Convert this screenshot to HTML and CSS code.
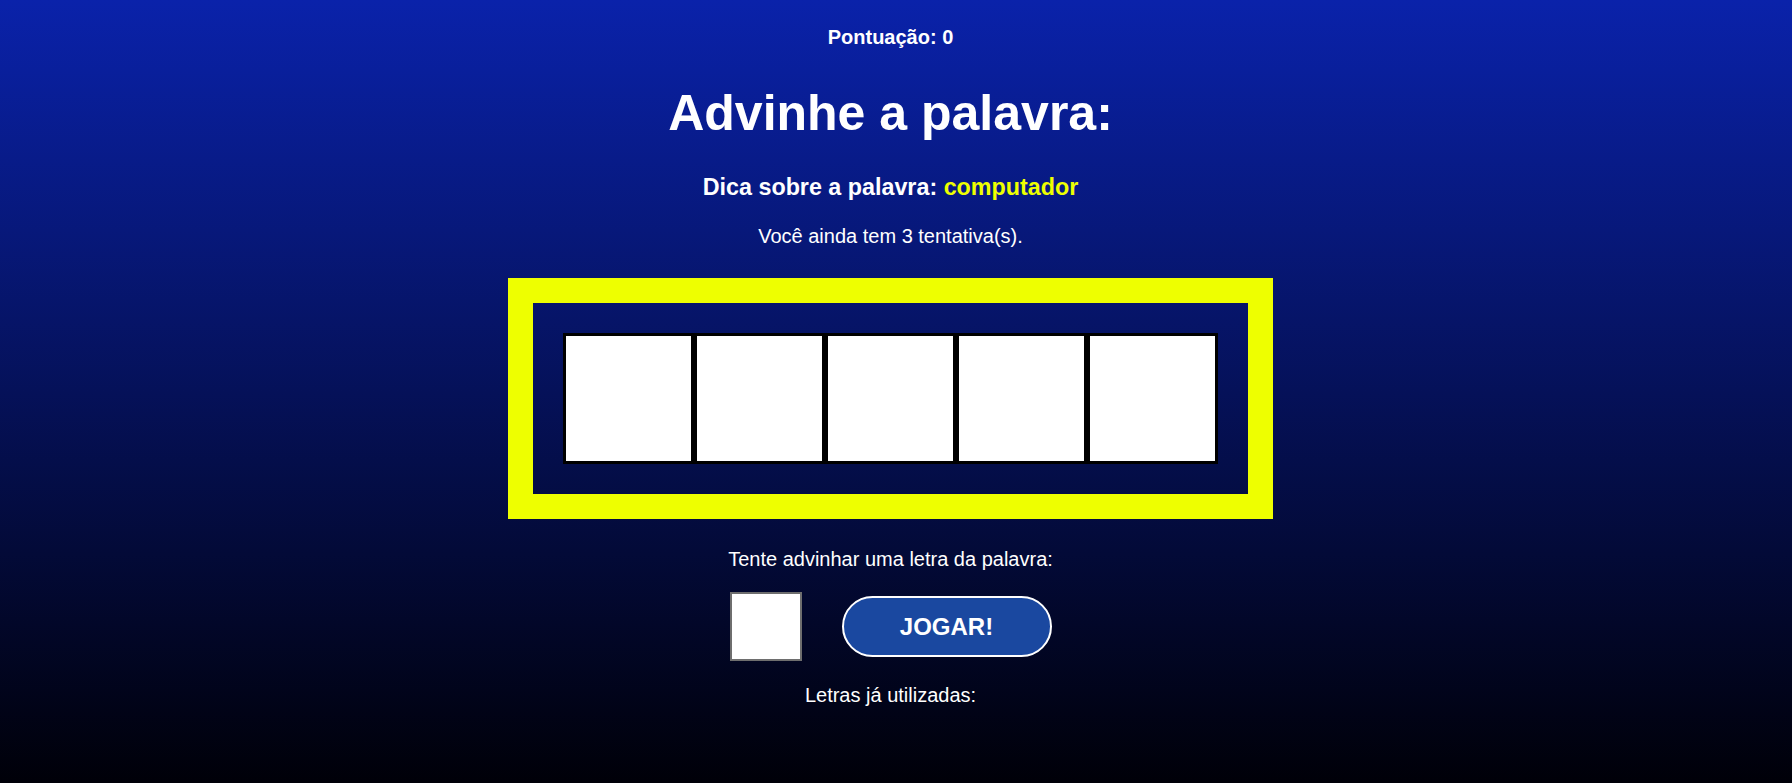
FILE: index.html
```html
<!DOCTYPE html>
<html lang="pt-BR">
<head>
<meta charset="utf-8">
<title>Advinhe a palavra</title>
<link rel="stylesheet" href="styles.css">
</head>
<body>
<main class="page">
  <p class="score">Pontuação: 0</p>
  <h1 class="title">Advinhe a palavra:</h1>
  <p class="hint">Dica sobre a palavra: <span class="hint-word">computador</span></p>
  <p class="tries">Você ainda tem 3 tentativa(s).</p>
  <section class="board">
    <div class="tiles">
      <div class="tile"></div>
      <div class="tile"></div>
      <div class="tile"></div>
      <div class="tile"></div>
      <div class="tile"></div>
    </div>
  </section>
  <p class="prompt">Tente advinhar uma letra da palavra:</p>
  <div class="controls">
    <input class="letter" type="text" maxlength="1" aria-label="letra">
    <button class="play" type="button">JOGAR!</button>
  </div>
  <p class="used">Letras já utilizadas:</p>
</main>
</body>
</html>
```
FILE: styles.css
```css
html, body {
  margin: 0;
  padding: 0;
  height: 100%;
}

body {
  background: linear-gradient(to bottom, #0a22aa 0%, #000008 100%);
  background-attachment: fixed;
  color: #ffffff;
  font-family: "Liberation Sans", Arial, sans-serif;
  overflow: hidden;
}

.page {
  display: flex;
  flex-direction: column;
  align-items: center;
  padding: 26px 11px 0 0;
  text-align: center;
}

.page p,
.page h1 {
  margin: 0;
}

.score {
  font-size: 20px;
  font-weight: 700;
  line-height: 23px;
}

.title {
  margin-top: 35px !important;
  font-size: 50px;
  font-weight: 700;
  line-height: 58px;
}

.hint {
  margin-top: 32px !important;
  font-size: 23.3px;
  font-weight: 700;
  line-height: 27px;
}

.hint-word {
  color: #eeff00;
}

.tries {
  margin-top: 24px !important;
  font-size: 20px;
  line-height: 23px;
}

.board {
  margin-top: 30px;
  border: 25px solid #eeff00;
  padding: 30px;
  background: transparent;
}

.tiles {
  display: flex;
}

.tile {
  width: 125px;
  height: 125px;
  border: 3px solid #000000;
  background: #ffffff;
}

.prompt {
  margin-top: 29px !important;
  font-size: 20px;
  line-height: 23px;
}

.controls {
  margin-top: 21px;
  display: flex;
  align-items: center;
  gap: 40px;
}

.letter {
  box-sizing: border-box;
  width: 72px;
  height: 69px;
  margin: 0;
  border: 2px solid #6e6e6e;
  background: #ffffff;
  font-family: "Liberation Sans", Arial, sans-serif;
  font-size: 32px;
  text-align: center;
  padding: 0;
}

.play {
  box-sizing: border-box;
  width: 210px;
  height: 61px;
  margin: 0;
  border: 2px solid #ffffff;
  border-radius: 999px;
  background: #1a48a0;
  color: #ffffff;
  font-family: "Liberation Sans", Arial, sans-serif;
  font-size: 24px;
  font-weight: 700;
  cursor: pointer;
}

.used {
  margin-top: 23px !important;
  font-size: 20px;
  line-height: 23px;
}
```
